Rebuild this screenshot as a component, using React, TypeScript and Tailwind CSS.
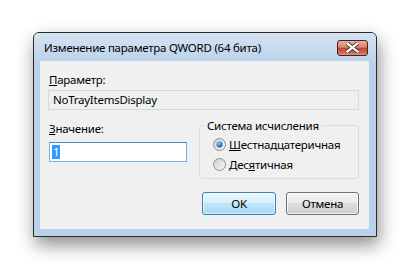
import React from "react";

const font = { fontFamily: '"Noto Sans", "DejaVu Sans", sans-serif' };

function Radio({ checked }: { checked?: boolean }) {
  return (
    <svg width="13" height="13" viewBox="0 0 13 13" className="shrink-0">
      <defs>
        <linearGradient id="rg" x1="0" y1="0" x2="1" y2="1">
          <stop offset="0" stopColor="#cfcfcf" />
          <stop offset="1" stopColor="#f7f7f7" />
        </linearGradient>
        <radialGradient id="dot" cx="0.4" cy="0.35" r="0.7">
          <stop offset="0" stopColor="#9fd3fb" />
          <stop offset="0.6" stopColor="#2a7bd2" />
          <stop offset="1" stopColor="#0f4c97" />
        </radialGradient>
      </defs>
      <circle cx="6.5" cy="6.5" r="6" fill="url(#rg)" stroke="#8e8f8f" strokeWidth="1" />
      {checked && <circle cx="6.5" cy="6.5" r="3" fill="url(#dot)" />}
    </svg>
  );
}

export default function App() {
  return (
    <div className="w-[409px] h-[269px] bg-white overflow-hidden pt-[32px] pl-[33px] tracking-[-0.25px]" style={font}>
      {/* окно диалога */}
      <div className="relative w-[344px] h-[205px] rounded-t-[6px] border border-[#2a2a2a] bg-[#b9d1ea] shadow-[2px_8px_18px_rgba(0,0,0,0.45)] flex flex-col">
        {/* заголовок */}
        <div className="h-[28px] shrink-0 rounded-t-[5px] bg-gradient-to-b from-[#d5e3f2] to-[#bcd3eb] flex items-center justify-between pl-[10px] pr-[8px]">
          <span className="text-[11.5px] text-black leading-none mt-[1px]">Изменение параметра QWORD (64 бита)</span>
          <button className="w-[31px] h-[16px] mt-[1px] rounded-[3px] border border-[#4a1f1a] bg-[linear-gradient(#eab1a3,#d8826f_45%,#c1432c_50%,#cf6a52_85%,#e09a87)] grid place-items-center">
            <svg width="13" height="11" viewBox="0 0 13 11">
              <path d="M1.5 1.5 L11.5 9.5 M11.5 1.5 L1.5 9.5" stroke="#3d3d3d" strokeWidth="4" strokeLinecap="square" />
              <path d="M1.5 1.5 L11.5 9.5 M11.5 1.5 L1.5 9.5" stroke="#ffffff" strokeWidth="2.2" strokeLinecap="square" />
            </svg>
          </button>
        </div>

        {/* рабочая область */}
        <div className="mx-[6px] w-[329px] h-[168px] bg-[#f0f0f0] text-[11.5px] text-black pt-[11px] pl-[8px] pr-[10px]">
          <div className="pl-[1px] leading-[15px]">
            <u>П</u>араметр:
          </div>
          <div className="mt-[3px] h-[20px] border border-[#d9d9d9] flex items-center pl-[4px] leading-none">
            NoTrayItemsDisplay
          </div>

          <div className="flex mt-[10px]">
            <div className="w-[151px] shrink-0 pl-[1px]">
              <div className="leading-[15px] mt-[1px]">
                <u>З</u>начение:
              </div>
              <div className="mt-[6px] w-[138px] h-[20px] bg-white border border-[#7fb0dd] border-t-[#4f8cc2] flex items-center pl-[2px]">
                <span className="bg-[#3399ff] text-white leading-[14px] px-[1px]">1</span>
              </div>
            </div>

            {/* группа */}
            <div className="relative flex-1 h-[54px] mt-[5px] border border-[#d5dfe5] rounded-[3px] pt-[11px] pl-[13px]">
              <div className="absolute -top-[8px] left-[4px] bg-[#f0f0f0] px-[3px] leading-[15px]">Система исчисления</div>
              <label className="flex items-center gap-[3px] h-[15px]">
                <Radio checked />
                <span className="leading-none">
                  <u>Ш</u>естнадцатеричная
                </span>
              </label>
              <label className="flex items-center gap-[3px] h-[15px] mt-[5px]">
                <Radio />
                <span className="leading-none">
                  Дес<u>я</u>тичная
                </span>
              </label>
            </div>
          </div>

          {/* кнопки */}
          <div className="flex justify-end gap-[10px] mt-[13px]">
            <button className="w-[74px] h-[23px] rounded-[3px] border border-[#3c7fb1] bg-[linear-gradient(#eaf6fd,#d9f0fc_45%,#bee6fd_50%,#a7d9f5)] shadow-[inset_0_0_0_1px_rgba(255,255,255,0.6)] text-[11.5px] leading-none">
              OK
            </button>
            <button className="w-[73px] h-[23px] rounded-[3px] border border-[#707070] bg-[linear-gradient(#f2f2f2,#ebebeb_45%,#dddddd_50%,#cfcfcf)] shadow-[inset_0_0_0_1px_rgba(255,255,255,0.7)] text-[11.5px] leading-none">
              Отмена
            </button>
          </div>
        </div>
      </div>
    </div>
  );
}
